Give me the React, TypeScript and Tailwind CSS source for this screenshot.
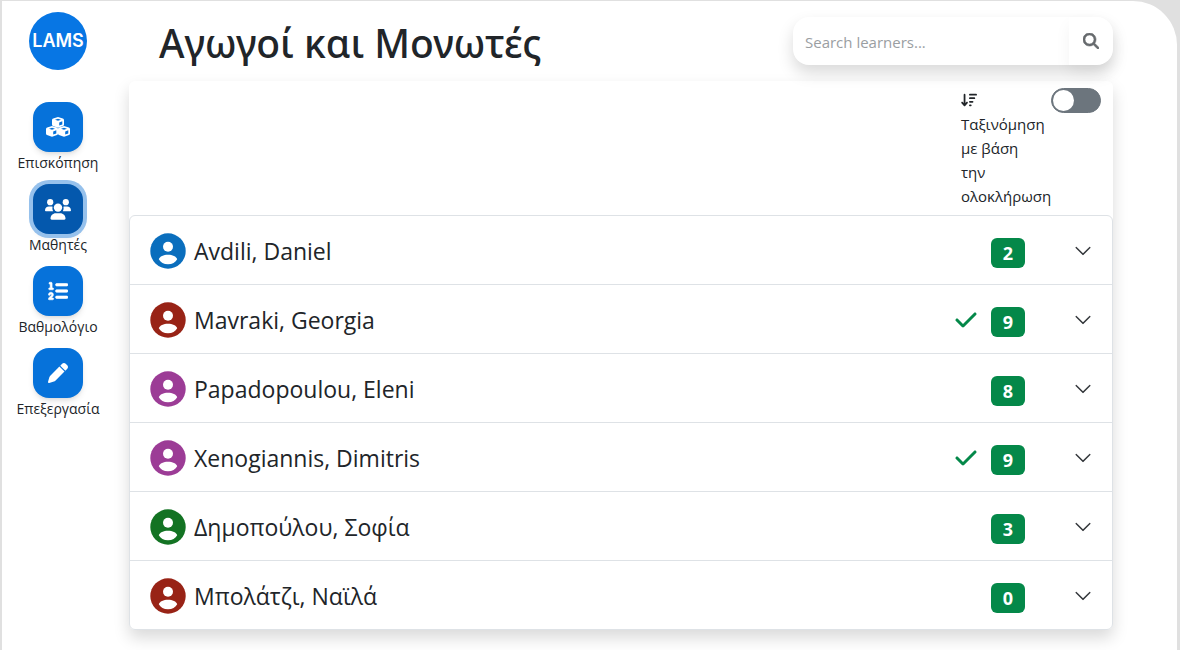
import React, { useState } from "react";
import {
  FaArrowDownWideShort,
  FaCheck,
  FaListOl,
  FaMagnifyingGlass,
  FaPen,
} from "react-icons/fa6";
import { BsChevronDown } from "react-icons/bs";

type IconProps = { className?: string };

// One cube: solid body, cut-out lid and right face
const cube =
  "M6 0 10.8 1.6Q12 2 12 3.2V7.4Q12 8.6 11 9L6.8 10.6Q6 10.9 5.2 10.6L1 9Q0 8.6 0 7.4V3.2Q0 2 1.2 1.6ZM6 1.7 3 2.7 6 3.8 9 2.7ZM7.2 5.4V8.6L10.3 7.4V4.3Z";

const CubesIcon: React.FC<IconProps> = ({ className }) => (
  <svg viewBox="0 0 24 20" fill="currentColor" fillRule="evenodd" className={className} aria-hidden="true">
    <path d={cube} transform="translate(6 0)" />
    <path d={cube} transform="translate(0 9)" />
    <path d={cube} transform="translate(12 9)" />
  </svg>
);

const UsersIcon: React.FC<IconProps> = ({ className }) => (
  <svg viewBox="0 0 26 21" fill="currentColor" className={className} aria-hidden="true">
    <circle cx="5.2" cy="3.2" r="3.1" />
    <circle cx="20.8" cy="3.2" r="3.1" />
    <circle cx="13" cy="8.6" r="4.2" />
    <path d="M0 11.4C0 9.2 1.7 7.5 3.9 7.500h2.400c.5 0 .9.1 1.300.3-.4 1.700-.1 3.200.6 4.400H.8c-.4 0-.8-.4-.8-.8Z" />
    <path d="M26 11.4c0-2.2-1.700-3.900-3.900-3.900h-2.400c-.5 0-.9.1-1.300.3.4 1.700.1 3.200-.6 4.400h7.400c.4 0 .8-.4.800-.8Z" />
    <path d="M5.500 19.600c0-3 2.300-5.300 5.300-5.300h4.400c3 0 5.300 2.300 5.300 5.300 0 .6-.5 1.100-1.100 1.100H6.600c-.6 0-1.100-.5-1.100-1.100Z" />
  </svg>
);

const AvatarIcon: React.FC<IconProps> = ({ className }) => (
  <svg viewBox="0 0 36 36" className={className} aria-hidden="true">
    <circle cx="18" cy="18" r="17.7" fill="currentColor" />
    <circle cx="18" cy="13.7" r="5" fill="white" />
    <path
      fill="white"
      d="M8.800 26.300c.8-2.900 4.800-4.600 9.200-4.600s8.400 1.700 9.200 4.600c-1.600 3.100-5 5-9.200 5s-7.600-1.900-9.200-5Z"
    />
  </svg>
);

const navItems = [
  { label: "Επισκόπηση", icon: CubesIcon, size: "h-5 w-6" },
  { label: "Μαθητές", icon: UsersIcon, size: "h-[21px] w-[26px]", active: true },
  { label: "Βαθμολόγιο", icon: FaListOl, size: "size-5 stroke-current stroke-[16px]" },
  { label: "Επεξεργασία", icon: FaPen, size: "size-5" },
];

const learners = [
  { name: "Avdili, Daniel", color: "text-[#0a6ebd]", count: 2 },
  { name: "Mavraki, Georgia", color: "text-[#982316]", count: 9, done: true },
  { name: "Papadopoulou, Eleni", color: "text-[#9c3c96]", count: 8 },
  { name: "Xenogiannis, Dimitris", color: "text-[#9c3c96]", count: 9, done: true },
  { name: "Δημοπούλου, Σοφία", color: "text-[#137323]", count: 3 },
  { name: "Μπολάτζι, Ναϊλά", color: "text-[#982316]", count: 0 },
];

const Sidebar: React.FC = () => (
  <aside className="flex w-28 shrink-0 flex-col items-center pt-[11px]">
    <a
      href="#home"
      className="flex size-[58px] items-center justify-center rounded-full bg-[#0776e4] font-['Inter'] text-lg font-semibold text-white"
    >
      LAMS
    </a>
    <nav className="mt-8 flex flex-col items-center gap-2.5">
      {navItems.map(({ label, icon: Icon, size, active }) => (
        <a key={label} href="#nav" className="flex flex-col items-center text-sm">
          <span
            className={`flex size-[50px] items-center justify-center rounded-2xl text-white shadow-md ${
              active ? "bg-[#0458ad] ring-4 ring-[#96c1ec]" : "bg-[#0672da]"
            }`}
          >
            <Icon className={size} />
          </span>
          <span className="leading-[22px]">{label}</span>
        </a>
      ))}
    </nav>
  </aside>
);

const SearchBox: React.FC = () => (
  <form className="flex h-12 w-80 rounded-2xl bg-white shadow-[0_8px_16px_rgba(0,0,0,0.15)]">
    <input
      type="text"
      aria-label="Search learners"
      placeholder="Search learners..."
      className="min-w-0 flex-1 rounded-l-2xl px-3 pt-0.5 text-[15px] outline-none placeholder:text-[#9a9ea2]"
    />
    <button
      type="button"
      aria-label="Search"
      className="flex w-11 items-center justify-center rounded-r-2xl text-base text-[#666a6d] shadow-[0_8px_16px_rgba(0,0,0,0.05)]"
    >
      <FaMagnifyingGlass className="stroke-current stroke-[20px]" />
    </button>
  </form>
);

const App: React.FC = () => {
  const [sorted, setSorted] = useState(false);

  return (
    <div className="min-h-screen bg-[#e0e0e0] pt-px pr-[3px] pl-0.5 font-['Open_Sans','Noto_Sans',sans-serif] text-[#212529]">
      <div className="flex min-h-[649px] rounded-tr-[44px] bg-white">
        <Sidebar />
        <main className="min-w-0 flex-1 pt-4 pr-16 pb-4 pl-[15px]">
          <header className="flex h-12 items-center justify-between pl-[30px]">
            <h1 className="pt-1 font-['Noto_Sans'] text-[39px] leading-12 font-medium">
              Αγωγοί και Μονωτές
            </h1>
            <SearchBox />
          </header>

          <section className="mt-4 rounded-md bg-white shadow-[0_8px_16px_rgba(0,0,0,0.15)]">
            <div className="flex items-start justify-end gap-2.5 pt-[7px] pr-3">
              <label htmlFor="sort" className="w-20 pb-[7px] text-[15px] leading-6">
                <FaArrowDownWideShort className="my-1 size-4" />
                Ταξινόμηση με βάση την ολοκλήρωση
              </label>
              <input
                id="sort"
                type="checkbox"
                role="switch"
                checked={sorted}
                onChange={() => setSorted(!sorted)}
                className="h-[25px] w-[50px] appearance-none rounded-full border border-[#6c757d] bg-[#6c757d] p-px before:block before:size-[21px] before:rounded-full before:bg-white checked:bg-[#0672da] checked:before:ml-auto"
              />
            </div>
            <ul className="divide-y divide-[#dee2e6] rounded-md border border-[#dee2e6]">
              {learners.map(({ name, color, count, done }) => (
                <li key={name}>
                  <button type="button" className="flex h-[68px] w-full items-center px-5 pt-0.5 text-left">
                    <AvatarIcon className={`size-9 ${color}`} />
                    <span className="ml-2 flex-1 text-[23px]">{name}</span>
                    {done && <FaCheck className="mr-[13px] size-6 text-[#048849]" />}
                    <span className="mt-1 mr-[49px] flex h-[30px] w-[34px] items-center justify-center rounded-md bg-[#048849] text-lg font-bold text-white">
                      {count}
                    </span>
                    <BsChevronDown className="size-[18px] stroke-current stroke-[0.3px]" />
                  </button>
                </li>
              ))}
            </ul>
          </section>
        </main>
      </div>
    </div>
  );
};

export default App;
